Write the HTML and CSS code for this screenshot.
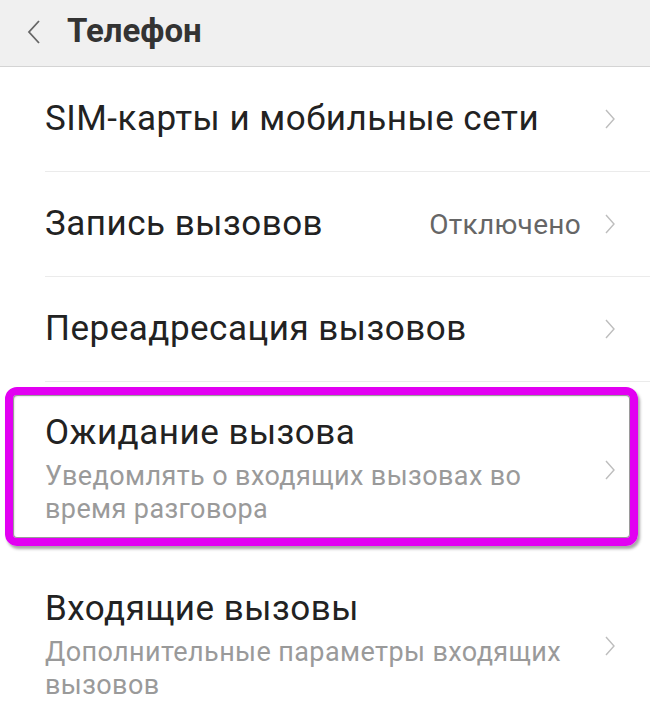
FILE: index.html
```html
<!DOCTYPE html>
<html lang="ru">
<head>
<meta charset="utf-8">
<title>Телефон</title>
<link rel="stylesheet" href="styles.css">
</head>
<body>
<header class="header">
  <svg class="back" width="14" height="24" viewBox="0 0 14 24"><path d="M12 1 L2 12 L12 23" fill="none" stroke="#666" stroke-width="1.8"/></svg>
  <h1 class="title">Телефон</h1>
</header>
<ul class="list">
  <li class="row">
    <span class="label">SIM-карты и мобильные сети</span>
    <svg class="chev" width="10" height="20" viewBox="0 0 10 20"><path d="M1 1 L9 10 L1 19" fill="none" stroke="#bdbdbd" stroke-width="1.4"/></svg>
  </li>
  <li class="row">
    <span class="label">Запись вызовов</span>
    <span class="value">Отключено</span>
    <svg class="chev" width="10" height="20" viewBox="0 0 10 20"><path d="M1 1 L9 10 L1 19" fill="none" stroke="#bdbdbd" stroke-width="1.4"/></svg>
  </li>
  <li class="row">
    <span class="label">Переадресация вызовов</span>
    <svg class="chev" width="10" height="20" viewBox="0 0 10 20"><path d="M1 1 L9 10 L1 19" fill="none" stroke="#bdbdbd" stroke-width="1.4"/></svg>
  </li>
  <li class="hl">
    <div class="texts">
      <span class="label">Ожидание вызова</span>
      <span class="sub">Уведомлять о входящих вызовах во время разговора</span>
    </div>
    <svg class="chev" width="10" height="20" viewBox="0 0 10 20"><path d="M1 1 L9 10 L1 19" fill="none" stroke="#bdbdbd" stroke-width="1.4"/></svg>
  </li>
  <li class="row tall">
    <div class="texts">
      <span class="label">Входящие вызовы</span>
      <span class="sub">Дополнительные параметры входящих вызовов</span>
    </div>
    <svg class="chev" width="10" height="20" viewBox="0 0 10 20"><path d="M1 1 L9 10 L1 19" fill="none" stroke="#bdbdbd" stroke-width="1.4"/></svg>
  </li>
</ul>
</body>
</html>
```
FILE: styles.css
```css
html, body {
  margin: 0;
  padding: 0;
  background: #ffffff;
  font-family: Roboto, "Noto Sans", sans-serif;
  overflow: hidden;
}
.header {
  height: 66px;
  background: #f0f0f0;
  border-bottom: 1px solid #d4d4d4;
  display: flex;
  align-items: center;
  padding-left: 27px;
  box-sizing: content-box;
}
.back {
  display: block;
  margin-top: -2px;
}
.title {
  margin: 0 0 0 26px;
  font-size: 33px;
  font-weight: 700;
  color: #333333;
  line-height: 40px;
  margin-top: -4px;
}
.list {
  list-style: none;
  margin: 0;
  padding: 0;
}
.row {
  display: flex;
  align-items: center;
  min-height: 104px;
  margin-left: 45px;
  padding-right: 35px;
  border-bottom: 1px solid #ebebeb;
}
.label {
  display: block;
  font-size: 35px;
  letter-spacing: 0.5px;
  line-height: 40px;
  color: #222222;
  flex: 1;
}
.value {
  font-size: 28px;
  letter-spacing: 0.3px;
  color: #666666;
  margin-right: 24px;
}
.chev {
  display: block;
  flex: none;
}
.hl {
  display: flex;
  align-items: center;
  margin: 5px 12px 0 5px;
  border: 8px solid #e200f2;
  border-radius: 12px;
  padding: 18px 15px 12px 32px;
  box-shadow: inset 0 0 0 1px #9a9a9a, inset 1px 1px 2px rgba(0,0,0,0.25), 2px 3px 3px rgba(0,0,0,0.35);
}
.texts {
  flex: 1;
  display: flex;
  flex-direction: column;
}
.sub {
  font-size: 27px;
  letter-spacing: 0.4px;
  line-height: 33px;
  margin-top: 7px;
  color: #9a9a9a;
  padding-right: 40px;
}
.tall {
  border-bottom: none;
  padding-top: 43px;
  padding-bottom: 30px;
}
```
